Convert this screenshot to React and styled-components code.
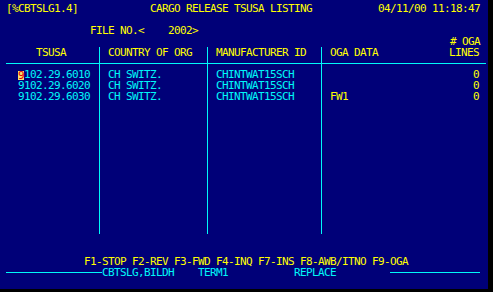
import React from 'react';
import styled, { createGlobalStyle } from 'styled-components';

const YELLOW = '#ffff00';
const CYAN = '#00f8f8';
const NAVY = '#000078';

const GlobalStyle = createGlobalStyle`
  html, body {
    margin: 0;
    padding: 0;
    background: #000;
  }
`;

const Screen = styled.div`
  width: 488px;
  height: 289px;
  box-sizing: border-box;
  padding: 3px 0 0 6px;
  background: ${NAVY};
  font-family: 'DejaVu Sans Mono', 'Liberation Mono', monospace;
  font-size: 11px;
  letter-spacing: -0.622px;
  overflow: hidden;
`;

const Line = styled.div`
  height: 11px;
  line-height: 11px;
  white-space: pre;
  color: ${(p) => p.$color || YELLOW};
  display: flex;
  align-items: center;
`;

const Table = styled.div`
  display: flex;
  width: 480px;
`;

const Column = styled.div`
  width: ${(p) => p.$width}px;
  box-sizing: border-box;
  border-right: ${(p) => (p.$last ? 'none' : `1px solid ${CYAN}`)};
  display: flex;
  flex-direction: column;
`;

const Cell = styled.div`
  height: 11px;
  line-height: 11px;
  white-space: pre;
  display: flex;
  justify-content: space-between;
  padding: 0 ${(p) => p.$right || 0}px 0 ${(p) => p.$left || 0}px;
  color: ${(p) => p.$color || CYAN};
`;

const Separator = styled.div`
  height: 11px;
  position: relative;
  &::after {
    content: '';
    position: absolute;
    left: 0;
    right: 0;
    top: 5px;
    height: 1px;
    background: ${CYAN};
  }
`;

const Cursor = styled.span`
  display: inline-block;
  width: 6px;
  height: 9px;
  line-height: 9px;
  background: #f8e070;
  color: #e00000;
  vertical-align: -1px;
`;

const Rule = styled.div`
  flex: none;
  width: ${(p) => p.$width}px;
  margin-left: ${(p) => p.$offset || 0}px;
  height: 1px;
  background: ${CYAN};
`;

const pad = (n) => ' '.repeat(n);

const rows = [
  { tsusa: '9102.29.6010', country: 'CH SWITZ.', mfr: 'CHINTWAT15SCH', oga: '', lines: '0', cursor: true },
  { tsusa: '9102.29.6020', country: 'CH SWITZ.', mfr: 'CHINTWAT15SCH', oga: '', lines: '0' },
  { tsusa: '9102.29.6030', country: 'CH SWITZ.', mfr: 'CHINTWAT15SCH', oga: 'FW1', lines: '0' },
];

const EMPTY_ROWS = 12;

function Blank() {
  return Array.from({ length: EMPTY_ROWS }, (_, i) => <Cell key={'b' + i} />);
}

export default function App() {
  return (
    <>
      <GlobalStyle />
      <Screen>
        <Line>
          {'[%CBTSLG1.4]' + pad(12) + 'CARGO RELEASE TSUSA LISTING' + pad(11) + '04/11/00 11:18:47'}
        </Line>
        <Line />
        <Line>{pad(14) + 'FILE NO.<    2002>'}</Line>
        <Line>{pad(74) + '# OGA'}</Line>

        <Table>
          <Column $width={94}>
            <Cell $color={YELLOW}>{pad(5) + 'TSUSA'}</Cell>
            <Separator />
            {rows.map((r) => (
              <Cell key={r.tsusa}>
                {r.cursor ? (
                  <span>
                    {'  '}
                    <Cursor>{r.tsusa[0]}</Cursor>
                    {r.tsusa.slice(1)}
                  </span>
                ) : (
                  '  ' + r.tsusa
                )}
              </Cell>
            ))}
            <Blank />
          </Column>
          <Column $width={108}>
            <Cell $left={8} $color={YELLOW}>COUNTRY OF ORG</Cell>
            <Separator />
            {rows.map((r) => (
              <Cell $left={8} key={r.tsusa}>{r.country}</Cell>
            ))}
            <Blank />
          </Column>
          <Column $width={114}>
            <Cell $left={8} $color={YELLOW}>MANUFACTURER ID</Cell>
            <Separator />
            {rows.map((r) => (
              <Cell $left={8} key={r.tsusa}>{r.mfr}</Cell>
            ))}
            <Blank />
          </Column>
          <Column $width={164} $last>
            <Cell $left={8} $right={7} $color={YELLOW}>
              <span>OGA DATA</span>
              <span>LINES</span>
            </Cell>
            <Separator />
            {rows.map((r) => (
              <Cell $left={8} $right={7} $color={YELLOW} key={r.tsusa}>
                <span>{r.oga}</span>
                <span>{r.lines}</span>
              </Cell>
            ))}
            <Blank />
          </Column>
        </Table>

        <Line />
        <Line />
        <Line>{pad(13) + 'F1-STOP F2-REV F3-FWD F4-INQ F7-INS F8-AWB/ITNO F9-OGA'}</Line>
        <Line $color={CYAN}>
          <Rule $width={96} />
          {'CBTSLG,BILDH' + pad(4) + 'TERM1' + pad(11) + 'REPLACE'}
          <Rule $width={90} $offset={54} />
        </Line>
      </Screen>
    </>
  );
}
